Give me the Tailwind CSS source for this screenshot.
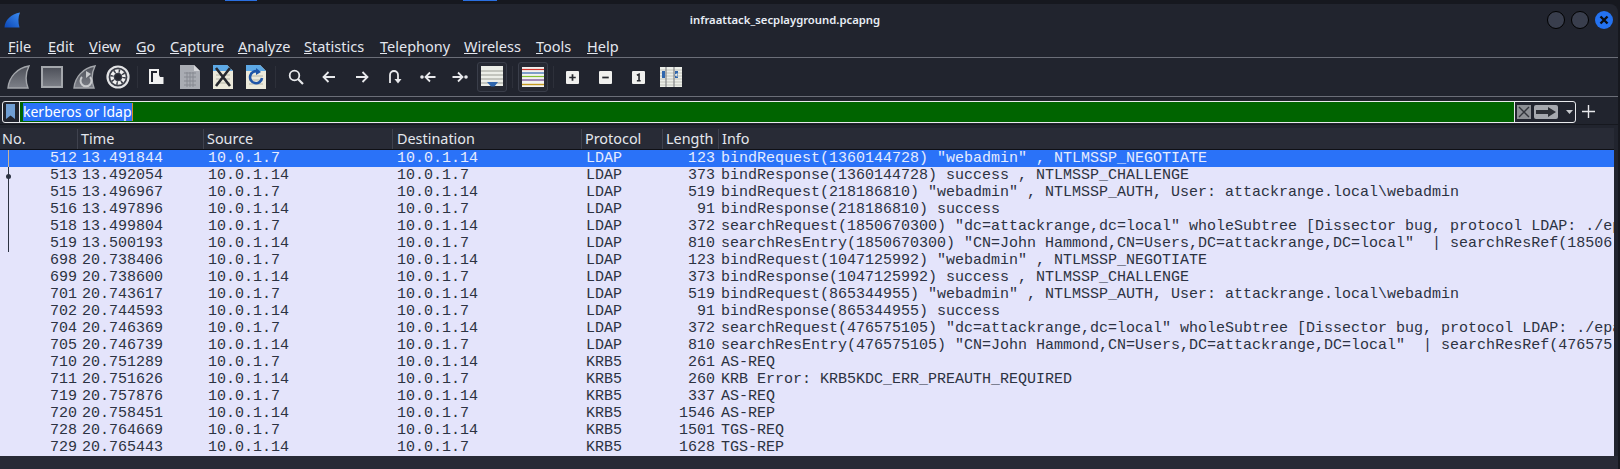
<!DOCTYPE html>
<html>
<head>
<meta charset="utf-8">
<script src="https://cdn.jsdelivr.net/npm/@tailwindcss/browser@4"></script>
</head>
<body class="bg-[#16181f] overflow-hidden">
<div class="w-[1620px] h-[469px] overflow-hidden relative font-['Noto_Sans',sans-serif]">
  <!-- top strip -->
  <div class="h-[4px] relative flex bg-[#16181f]">
    <div class="ml-[225px] w-[32px] h-[1px] bg-[#2a6fe0]"></div>
    <div class="ml-[206px] w-[34px] h-[1px] bg-[#2a6fe0]"></div>
  </div>
  <div class="w-[1618px] h-[465px] bg-[#21242e] rounded-tr-[8px] flex flex-col">
    <!-- title bar -->
    <div class="h-[29px] relative flex items-center justify-center shrink-0">
      <svg class="absolute left-[4px] top-[8px]" width="16" height="16" viewBox="0 0 16 16"><defs><linearGradient id="g0" x1="0" y1="1" x2="1" y2="0"><stop offset="0" stop-color="#0b46b4"/><stop offset="1" stop-color="#3c8cf2"/></linearGradient></defs><path d="M0.5 15.5C0.5 8.5 7 2 16 0.5C14 5 14 10 15.5 15.5Z" fill="url(#g0)"/></svg>
      <span class="ml-[-48px] mt-[2px] text-[11.3px] font-semibold text-[#e8edf5] leading-none">infraattack_secplayground.pcapng</span>
      <div class="absolute left-[1547px] top-[7px] flex gap-[6px]">
        <div class="w-[18px] h-[18px] rounded-full bg-[#393e4d] border border-black"></div>
        <div class="w-[18px] h-[18px] rounded-full bg-[#393e4d] border border-black"></div>
        <div class="w-[18px] h-[18px] rounded-full bg-[#2472f0] flex items-center justify-center">
          <svg width="10" height="10" viewBox="0 0 10 10"><path d="M1.5 1.5L8.5 8.5M8.5 1.5L1.5 8.5" stroke="#0b0d12" stroke-width="2.4"/></svg>
        </div>
      </div>
    </div>
    <!-- menu bar -->
    <div class="h-[25px] flex items-center pl-[8px] pt-[2px] text-[14.5px] text-[#e4e7ee] border-b border-[#6b6e78] shrink-0 leading-none">
      <span class="w-[40px]"><u>F</u>ile</span>
      <span class="w-[41px]"><u>E</u>dit</span>
      <span class="w-[47px]"><u>V</u>iew</span>
      <span class="w-[34px]"><u>G</u>o</span>
      <span class="w-[68px]"><u>C</u>apture</span>
      <span class="w-[66px]"><u>A</u>nalyze</span>
      <span class="w-[76px]"><u>S</u>tatistics</span>
      <span class="w-[84px]"><u>T</u>elephony</span>
      <span class="w-[72px]"><u>W</u>ireless</span>
      <span class="w-[51px]"><u>T</u>ools</span>
      <span><u>H</u>elp</span>
    </div>
    <!-- toolbar -->
    <div class="h-[39px] flex items-center pl-[2px] border-b border-[#6b6e78] shrink-0">
      <div class="w-[33px] flex justify-center"><svg width="23" height="24" viewBox="0 0 23 24"><defs><linearGradient id="g1" x1="0" y1="0" x2="0" y2="1"><stop offset="0" stop-color="#4c4f58"/><stop offset="1" stop-color="#7d8088"/></linearGradient></defs><path d="M1 23C2 12 10 3 22 1C19 7 18 15 21 23Z" fill="url(#g1)" stroke="#a4a7ac" stroke-width="1.4"/></svg></div>
      <div class="w-[33px] flex justify-center"><svg width="22" height="22" viewBox="0 0 22 22"><rect x="1" y="1" width="20" height="20" fill="url(#g1)" stroke="#a4a7ac" stroke-width="2"/></svg></div>
      <div class="w-[33px] flex justify-center"><svg width="23" height="24" viewBox="0 0 23 24"><path d="M1 23C2 12 10 3 22 1C19 7 18 15 21 23Z" fill="url(#g1)" stroke="#a4a7ac" stroke-width="1.4"/><path d="M9 12A5.5 5.5 0 1 0 17 12" fill="none" stroke="#c8cacd" stroke-width="2"/><path d="M13 6L18 9L13 13Z" fill="#c8cacd"/></svg></div>
      <div class="w-[33px] flex justify-center"><svg width="24" height="24" viewBox="0 0 24 24"><circle cx="12" cy="12" r="10.5" fill="#3a3d47" stroke="#e2e3e5" stroke-width="2.2"/><circle cx="12" cy="12" r="6" fill="none" stroke="#f0f0f0" stroke-width="3.4"/><circle cx="12" cy="12" r="6" fill="none" stroke="#3a3d47" stroke-width="3.4" stroke-dasharray="1.4 3.3"/><circle cx="12" cy="12" r="3" fill="#24262f"/></svg></div>
      <div class="w-[1px] h-[22px] bg-[#2d303a] ml-[3px] mr-[2px]"></div>
      <div class="w-[33px] flex justify-center"><svg width="15" height="16" viewBox="0 0 15 16"><path d="M1 1H9V5H5V14H1Z" fill="none" stroke="#f0f0f0" stroke-width="2"/><path d="M6 6H10L11 8H14.5V15H6Z" fill="#f0f0f0"/></svg></div>
      <div class="w-[33px] flex justify-center"><svg width="20" height="24" viewBox="0 0 20 24"><path d="M0 0H14L20 6V24H0Z" fill="#a9acb3"/><path d="M14 0L20 6H14Z" fill="#d5d6da"/><path d="M4 8H16M4 12H16M4 16H16M4 20H16M7 7V22M10 7V22M13 7V22" stroke="#868991" stroke-width="1" fill="none"/></svg></div>
      <div class="w-[33px] flex justify-center"><svg width="20" height="24" viewBox="0 0 20 24"><path d="M0 0H14L20 6V24H0Z" fill="#eceadb"/><path d="M0 0H14L20 6H0Z" fill="#5da9e6"/><path d="M3 10H17M3 14H17M3 18H17" stroke="#b5b6a8" stroke-width="1"/><path d="M3 3L17 21M17 3L3 21" stroke="#26282e" stroke-width="2.6"/></svg></div>
      <div class="w-[33px] flex justify-center"><svg width="20" height="24" viewBox="0 0 20 24"><path d="M0 0H14L20 6V24H0Z" fill="#eceadb"/><path d="M0 0H14L20 6H0Z" fill="#5da9e6"/><path d="M3 11H17M3 15H17M3 19H17" stroke="#b5b6a8" stroke-width="1"/><path d="M12 6.5A6 6 0 1 0 16 13" fill="none" stroke="#1f56a8" stroke-width="2.6"/><path d="M10 3L15 7L10 10Z" fill="#1f56a8"/></svg></div>
      <div class="w-[1px] h-[22px] bg-[#2d303a] ml-[3px] mr-[3px]"></div>
      <div class="w-[33px] flex justify-center"><svg width="16" height="16" viewBox="0 0 16 16"><circle cx="6.5" cy="6.5" r="4.8" fill="none" stroke="#e8e9ec" stroke-width="1.8"/><path d="M10 10L15 15" stroke="#e8e9ec" stroke-width="2.2"/></svg></div>
      <div class="w-[33px] flex justify-center"><svg width="14" height="12" viewBox="0 0 14 12"><path d="M13 6H2M6.5 1L1.5 6L6.5 11" fill="none" stroke="#e8e9ec" stroke-width="1.8"/></svg></div>
      <div class="w-[33px] flex justify-center"><svg width="14" height="12" viewBox="0 0 14 12"><path d="M1 6H12M7.5 1L12.5 6L7.5 11" fill="none" stroke="#e8e9ec" stroke-width="1.8"/></svg></div>
      <div class="w-[33px] flex justify-center"><svg width="14" height="14" viewBox="0 0 14 14"><path d="M2 13V5A4 4 0 0 1 10 5V10" fill="none" stroke="#e8e9ec" stroke-width="1.8"/><path d="M6.5 9H13.5L10 13.5Z" fill="#e8e9ec"/></svg></div>
      <div class="w-[33px] flex justify-center"><svg width="16" height="12" viewBox="0 0 16 12"><circle cx="2" cy="6" r="1.8" fill="#e8e9ec"/><path d="M15.5 6H6M10 1.5L5.5 6L10 10.5" fill="none" stroke="#e8e9ec" stroke-width="1.8"/></svg></div>
      <div class="w-[32px] flex justify-center"><svg width="16" height="12" viewBox="0 0 16 12"><circle cx="14" cy="6" r="1.8" fill="#e8e9ec"/><path d="M0.5 6H10M6 1.5L10.5 6L6 10.5" fill="none" stroke="#e8e9ec" stroke-width="1.8"/></svg></div>
      <div class="w-[30px] h-[30px] ml-[1px] rounded-[3px] border border-[#3a3e4a] bg-[#262933] flex items-center justify-center"><svg width="22" height="24" viewBox="0 0 22 24"><rect y="1" width="22" height="20" fill="#eceee8"/><path d="M0 6H22M0 10H22M0 14H22M0 18H22" stroke="#9a9c94" stroke-width="1"/><path d="M10 17H21L17.5 21.5H14Z" fill="#2f66ae" transform="translate(-4 0)"/></svg></div>
      <div class="w-[1px] h-[22px] bg-[#2d303a] mx-[5px]"></div>
      <div class="w-[30px] h-[30px] rounded-[3px] border border-[#3a3e4a] bg-[#262933] flex items-center justify-center"><svg width="22" height="20" viewBox="0 0 22 20"><rect width="22" height="20" fill="#f2f2f0"/><path d="M0 2.5H22" stroke="#d0342c" stroke-width="1.2"/><path d="M0 6H22" stroke="#2f66ae" stroke-width="1.2"/><path d="M0 9.5H22" stroke="#86c232" stroke-width="1.2"/><path d="M0 13H22" stroke="#6c3f8e" stroke-width="1.2"/><path d="M0 17.5H22" stroke="#c59a1f" stroke-width="1.4"/></svg></div>
      <div class="w-[1px] h-[22px] bg-[#2d303a] ml-[5px] mr-[2px]"></div>
      <div class="w-[33px] flex justify-center"><svg width="12" height="12" viewBox="0 0 12 12" class="w-[13px] h-[13px]"><rect width="12" height="12" rx="1" fill="#f0f0ee"/><path d="M6 3V9M3 6H9" stroke="#26282e" stroke-width="1.6"/></svg></div>
      <div class="w-[33px] flex justify-center"><svg width="12" height="12" viewBox="0 0 12 12" class="w-[13px] h-[13px]"><rect width="12" height="12" rx="1" fill="#f0f0ee"/><path d="M3 6H9" stroke="#26282e" stroke-width="1.6"/></svg></div>
      <div class="w-[32px] flex justify-center"><svg width="12" height="12" viewBox="0 0 12 12" class="w-[13px] h-[13px]"><rect width="12" height="12" rx="1" fill="#f0f0ee"/><path d="M4.5 4L6.5 3V9M4.5 9H8" stroke="#26282e" stroke-width="1.5" fill="none"/></svg></div>
      <div class="w-[33px] flex justify-center"><svg width="22" height="20" viewBox="0 0 22 20"><rect width="22" height="20" fill="#eceee8"/><path d="M0 3H22M0 6H22M0 9H22M0 12H22M0 15H22M0 18H22" stroke="#c2c4bc" stroke-width="1"/><path d="M6 0V20M14 0V20" stroke="#85878a" stroke-width="1.2"/><path d="M2 6L5.5 8L2 10ZM17.5 6L14 8L17.5 10Z M2 4H5V11H2Z M15 4H18V11H15Z" fill="#2f66ae"/></svg></div>
    </div>
    <!-- filter row -->
    <div class="h-[28px] flex items-center pt-[2px] pl-[2px] border-b border-[#16181f] shrink-0 relative">
      <div class="w-[1574px] h-[22px] border border-[#e8e9ec] rounded-[3px] flex items-stretch">
        <div class="w-[17px] flex items-center justify-center border-r border-[#e8e9ec] pr-[2px]"><svg width="9" height="15" viewBox="0 0 9 15"><path d="M0 0H9V15L4.5 11.5L0 15Z" fill="#6f9ed3"/></svg></div>
        <div class="w-[1494px] bg-[#006400] flex items-center pl-[3px]"><span class="bg-[#2a72f8] text-white text-[14px] leading-[18px] border-r border-[#d98a2b]">kerberos or ldap</span></div>
        <div class="flex-1 flex items-center border-l border-[#e8e9ec] pl-[2px] gap-[3px]">
          <div class="w-[14px] h-[14px] bg-[#8d8f94] flex items-center justify-center"><svg width="12" height="12" viewBox="0 0 12 12"><path d="M1 1L11 11M11 1L1 11" stroke="#33353c" stroke-width="1.4"/></svg></div>
          <div class="w-[24px] h-[14px] rounded-[2px] bg-[#a6a8ae] flex items-center justify-center"><svg width="20" height="10" viewBox="0 0 20 10"><path d="M0 3H12V0L20 5L12 10V7H0Z" fill="#2d2f36"/></svg></div>
          <svg class="ml-[5px]" width="7" height="4" viewBox="0 0 7 4"><path d="M0 0H7L3.5 4Z" fill="#c8cacd"/></svg>
        </div>
      </div>
      <svg class="ml-[6px]" width="13" height="13" viewBox="0 0 13 13"><path d="M6.5 0V13M0 6.5H13" stroke="#e8e9ec" stroke-width="1.4"/></svg>
    </div>
    <!-- packet list -->
    <div class="ml-[0px] w-[1614px] relative shrink-0 mt-[3px]">
      <div class="h-[22px] flex items-center bg-[#282b36] pt-[1px] text-[14.4px] text-[#e4e7ee] border-b border-[#0f1015] leading-none">
        <div class="w-[78px] pl-[2px] h-full flex items-center border-r border-[#3f424e]">No.</div>
        <div class="w-[126px] pl-[3px] h-full flex items-center border-r border-[#3f424e]">Time</div>
        <div class="w-[189px] pl-[3px] h-full flex items-center border-r border-[#3f424e]">Source</div>
        <div class="w-[189px] pl-[4px] h-full flex items-center border-r border-[#3f424e]">Destination</div>
        <div class="w-[81px] pl-[3px] h-full flex items-center border-r border-[#3f424e]">Protocol</div>
        <div class="w-[56px] pl-[3px] h-full flex items-center border-r border-[#3f424e]">Length</div>
        <div class="flex-1 pl-[3px]">Info</div>
      </div>
      <div class="font-['Liberation_Mono',monospace] text-[15px] leading-[17px] text-[#2c3242] bg-[#e4e4fb] [&>div>div]:whitespace-pre overflow-hidden">
        <div class="h-[17px] flex bg-[#2a72f8] text-[#e6ecff]"><div class="w-[77px] text-right">512</div><div class="w-[127px] pl-[5px]">13.491844</div><div class="w-[189px] pl-[4px]">10.0.1.7</div><div class="w-[189px] pl-[4px]">10.0.1.14</div><div class="w-[80px] pl-[4px]">LDAP</div><div class="w-[53px] text-right">123</div><div class="flex-1 pl-[6px]">bindRequest(1360144728) "webadmin" , NTLMSSP_NEGOTIATE</div></div>
        <div class="h-[17px] flex"><div class="w-[77px] text-right">513</div><div class="w-[127px] pl-[5px]">13.492054</div><div class="w-[189px] pl-[4px]">10.0.1.14</div><div class="w-[189px] pl-[4px]">10.0.1.7</div><div class="w-[80px] pl-[4px]">LDAP</div><div class="w-[53px] text-right">373</div><div class="flex-1 pl-[6px]">bindResponse(1360144728) success , NTLMSSP_CHALLENGE</div></div>
        <div class="h-[17px] flex"><div class="w-[77px] text-right">515</div><div class="w-[127px] pl-[5px]">13.496967</div><div class="w-[189px] pl-[4px]">10.0.1.7</div><div class="w-[189px] pl-[4px]">10.0.1.14</div><div class="w-[80px] pl-[4px]">LDAP</div><div class="w-[53px] text-right">519</div><div class="flex-1 pl-[6px]">bindRequest(218186810) "webadmin" , NTLMSSP_AUTH, User: attackrange.local\webadmin</div></div>
        <div class="h-[17px] flex"><div class="w-[77px] text-right">516</div><div class="w-[127px] pl-[5px]">13.497896</div><div class="w-[189px] pl-[4px]">10.0.1.14</div><div class="w-[189px] pl-[4px]">10.0.1.7</div><div class="w-[80px] pl-[4px]">LDAP</div><div class="w-[53px] text-right">91</div><div class="flex-1 pl-[6px]">bindResponse(218186810) success</div></div>
        <div class="h-[17px] flex"><div class="w-[77px] text-right">518</div><div class="w-[127px] pl-[5px]">13.499804</div><div class="w-[189px] pl-[4px]">10.0.1.7</div><div class="w-[189px] pl-[4px]">10.0.1.14</div><div class="w-[80px] pl-[4px]">LDAP</div><div class="w-[53px] text-right">372</div><div class="flex-1 min-w-0 pl-[6px] overflow-hidden">searchRequest(1850670300) "dc=attackrange,dc=local" wholeSubtree [Dissector bug, protocol LDAP: ./ep</div></div>
        <div class="h-[17px] flex"><div class="w-[77px] text-right">519</div><div class="w-[127px] pl-[5px]">13.500193</div><div class="w-[189px] pl-[4px]">10.0.1.14</div><div class="w-[189px] pl-[4px]">10.0.1.7</div><div class="w-[80px] pl-[4px]">LDAP</div><div class="w-[53px] text-right">810</div><div class="flex-1 min-w-0 pl-[6px] overflow-hidden">searchResEntry(1850670300) "CN=John Hammond,CN=Users,DC=attackrange,DC=local"  | searchResRef(18506</div></div>
        <div class="h-[17px] flex"><div class="w-[77px] text-right">698</div><div class="w-[127px] pl-[5px]">20.738406</div><div class="w-[189px] pl-[4px]">10.0.1.7</div><div class="w-[189px] pl-[4px]">10.0.1.14</div><div class="w-[80px] pl-[4px]">LDAP</div><div class="w-[53px] text-right">123</div><div class="flex-1 pl-[6px]">bindRequest(1047125992) "webadmin" , NTLMSSP_NEGOTIATE</div></div>
        <div class="h-[17px] flex"><div class="w-[77px] text-right">699</div><div class="w-[127px] pl-[5px]">20.738600</div><div class="w-[189px] pl-[4px]">10.0.1.14</div><div class="w-[189px] pl-[4px]">10.0.1.7</div><div class="w-[80px] pl-[4px]">LDAP</div><div class="w-[53px] text-right">373</div><div class="flex-1 pl-[6px]">bindResponse(1047125992) success , NTLMSSP_CHALLENGE</div></div>
        <div class="h-[17px] flex"><div class="w-[77px] text-right">701</div><div class="w-[127px] pl-[5px]">20.743617</div><div class="w-[189px] pl-[4px]">10.0.1.7</div><div class="w-[189px] pl-[4px]">10.0.1.14</div><div class="w-[80px] pl-[4px]">LDAP</div><div class="w-[53px] text-right">519</div><div class="flex-1 pl-[6px]">bindRequest(865344955) "webadmin" , NTLMSSP_AUTH, User: attackrange.local\webadmin</div></div>
        <div class="h-[17px] flex"><div class="w-[77px] text-right">702</div><div class="w-[127px] pl-[5px]">20.744593</div><div class="w-[189px] pl-[4px]">10.0.1.14</div><div class="w-[189px] pl-[4px]">10.0.1.7</div><div class="w-[80px] pl-[4px]">LDAP</div><div class="w-[53px] text-right">91</div><div class="flex-1 pl-[6px]">bindResponse(865344955) success</div></div>
        <div class="h-[17px] flex"><div class="w-[77px] text-right">704</div><div class="w-[127px] pl-[5px]">20.746369</div><div class="w-[189px] pl-[4px]">10.0.1.7</div><div class="w-[189px] pl-[4px]">10.0.1.14</div><div class="w-[80px] pl-[4px]">LDAP</div><div class="w-[53px] text-right">372</div><div class="flex-1 min-w-0 pl-[6px] overflow-hidden">searchRequest(476575105) "dc=attackrange,dc=local" wholeSubtree [Dissector bug, protocol LDAP: ./epa</div></div>
        <div class="h-[17px] flex"><div class="w-[77px] text-right">705</div><div class="w-[127px] pl-[5px]">20.746739</div><div class="w-[189px] pl-[4px]">10.0.1.14</div><div class="w-[189px] pl-[4px]">10.0.1.7</div><div class="w-[80px] pl-[4px]">LDAP</div><div class="w-[53px] text-right">810</div><div class="flex-1 min-w-0 pl-[6px] overflow-hidden">searchResEntry(476575105) "CN=John Hammond,CN=Users,DC=attackrange,DC=local"  | searchResRef(476575</div></div>
        <div class="h-[17px] flex"><div class="w-[77px] text-right">710</div><div class="w-[127px] pl-[5px]">20.751289</div><div class="w-[189px] pl-[4px]">10.0.1.7</div><div class="w-[189px] pl-[4px]">10.0.1.14</div><div class="w-[80px] pl-[4px]">KRB5</div><div class="w-[53px] text-right">261</div><div class="flex-1 pl-[6px]">AS-REQ</div></div>
        <div class="h-[17px] flex"><div class="w-[77px] text-right">711</div><div class="w-[127px] pl-[5px]">20.751626</div><div class="w-[189px] pl-[4px]">10.0.1.14</div><div class="w-[189px] pl-[4px]">10.0.1.7</div><div class="w-[80px] pl-[4px]">KRB5</div><div class="w-[53px] text-right">260</div><div class="flex-1 pl-[6px]">KRB Error: KRB5KDC_ERR_PREAUTH_REQUIRED</div></div>
        <div class="h-[17px] flex"><div class="w-[77px] text-right">719</div><div class="w-[127px] pl-[5px]">20.757876</div><div class="w-[189px] pl-[4px]">10.0.1.7</div><div class="w-[189px] pl-[4px]">10.0.1.14</div><div class="w-[80px] pl-[4px]">KRB5</div><div class="w-[53px] text-right">337</div><div class="flex-1 pl-[6px]">AS-REQ</div></div>
        <div class="h-[17px] flex"><div class="w-[77px] text-right">720</div><div class="w-[127px] pl-[5px]">20.758451</div><div class="w-[189px] pl-[4px]">10.0.1.14</div><div class="w-[189px] pl-[4px]">10.0.1.7</div><div class="w-[80px] pl-[4px]">KRB5</div><div class="w-[53px] text-right">1546</div><div class="flex-1 pl-[6px]">AS-REP</div></div>
        <div class="h-[17px] flex"><div class="w-[77px] text-right">728</div><div class="w-[127px] pl-[5px]">20.764669</div><div class="w-[189px] pl-[4px]">10.0.1.7</div><div class="w-[189px] pl-[4px]">10.0.1.14</div><div class="w-[80px] pl-[4px]">KRB5</div><div class="w-[53px] text-right">1501</div><div class="flex-1 pl-[6px]">TGS-REQ</div></div>
        <div class="h-[17px] flex"><div class="w-[77px] text-right">729</div><div class="w-[127px] pl-[5px]">20.765443</div><div class="w-[189px] pl-[4px]">10.0.1.14</div><div class="w-[189px] pl-[4px]">10.0.1.7</div><div class="w-[80px] pl-[4px]">KRB5</div><div class="w-[53px] text-right">1628</div><div class="flex-1 pl-[6px]">TGS-REP</div></div>
      </div>
      <!-- related packet gutter overlay -->
      <div class="absolute left-[8px] top-[22px] w-[1px] h-[17px] bg-[#c9b39a]"></div>
      <div class="absolute left-[8px] top-[39px] w-[1px] h-[85px] bg-[#2c3242]"></div>
      <div class="absolute left-[6px] top-[46px] w-[5px] h-[5px] rounded-full bg-[#2c3242]"></div>
    </div>
    <div class="flex-1 bg-[#282a36]"></div>
  </div>
</div>
</body>
</html>
